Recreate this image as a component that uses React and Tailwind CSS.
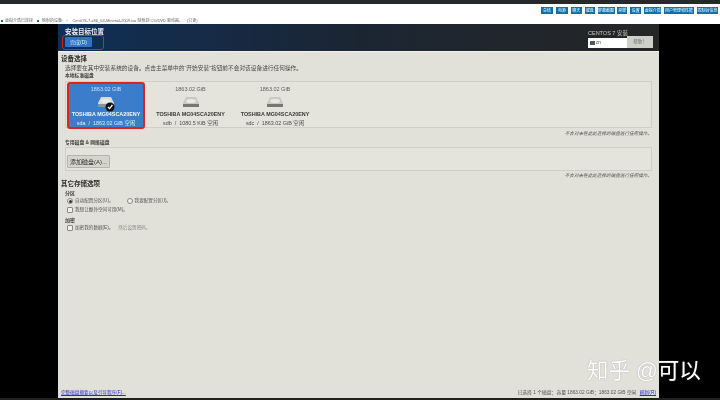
const font = { fontFamily: '"Liberation Sans","Noto Sans CJK SC",sans-serif' };

function Disk({ selected, sub, free }) {
  return (
    <div className={`w-[76px] h-[45px] flex flex-col items-center pt-[3px] rounded-[2px] relative ${selected ? "bg-[#3b7dcb] text-[#f2f6fb] outline-2 -outline-offset-1 outline-[#d8261c]" : "text-[#3a3a36]"}`}>
      <div className="text-[5.5px] leading-[7px] opacity-80">1863.02 GiB</div>
      <svg width="20" height="13" viewBox="0 0 20 13" className="mt-[3px] overflow-visible relative z-10">
        <path d="M5 1h10l3 6v4H2V7z" fill={selected ? "#d6d9dc" : "#c9cac4"} />
        <path d="M2 8h16v3H2z" fill={selected ? "#8d9299" : "#77786f"} />
        <ellipse cx="10" cy="5" rx="5" ry="2" fill="#e8e9e6" />
        {selected && <circle cx="14" cy="11" r="4.5" fill="#111" />}
        {selected && <path d="M12 11l1.6 1.6L16.4 9" stroke="#fff" strokeWidth="1.3" fill="none" />}
      </svg>
      <div className="text-[5.4px] leading-[7px] font-bold mt-[2px] whitespace-nowrap">TOSHIBA MG04SCA20ENY</div>
      <div className="text-[5.4px] leading-[7px] mt-[2px] whitespace-nowrap opacity-90">{sub} &nbsp;/&nbsp; {free} 空闲</div>
    </div>
  );
}

function Check({ children }) {
  return (
    <div className="flex items-center gap-[2px] text-[4.6px] leading-[8px] text-[#55564f]">
      <span className="w-[6px] h-[6px] border-[0.5px] border-[#8a8a82] bg-[#f1f1ec] rounded-[1px]" />
      {children}
    </div>
  );
}

function Radio({ on, children }) {
  return (
    <div className="flex items-center gap-[2px] text-[4.6px] leading-[8px] text-[#55564f]">
      <span className="w-[6px] h-[6px] border-[0.5px] border-[#8a8a82] rounded-full flex items-center justify-center bg-[#f1f1ec]">
        {on && <span className="w-[3px] h-[3px] rounded-full bg-[#333]" />}
      </span>
      {children}
    </div>
  );
}

const tools = [
  ["总结", 12], ["电源", 12], ["聊天", 11], ["键盘", 10], ["屏幕截图", 17], ["刷新", 10],
  ["设置", 11], ["虚拟介质", 17], ["用户管理和性能", 30], ["控制台信息", 21],
];

export default function App() {
  return (
    <div style={font} className="relative w-[720px] h-[400px] bg-black flex flex-col overflow-hidden blur-[0.35px]">
      <div className="h-[4px] bg-[#26282a] shrink-0" />
      <div className="h-[20px] bg-white shrink-0 flex flex-col pt-[3px]">
        <div className="flex justify-end gap-[2.9px] pr-[2px] h-[7px]">
          {tools.map(([t, w]) => (
            <div key={t} style={{ width: w }} className="bg-[#0f6fa9] text-white text-[4px] leading-[7px] text-center whitespace-nowrap overflow-hidden">{t}</div>
          ))}
        </div>
        <div className="flex items-center pl-[1px] mt-[4px] text-[4px] leading-[6px] text-[#666] whitespace-nowrap">
          <span className="w-[2px] h-[2px] bg-[#1a7a35]" />
          <span className="ml-[2px]">虚拟介质已连接</span>
          <span className="w-[2px] h-[2px] bg-[#1a7a35] ml-[4px]" />
          <span className="ml-[3px]">映射的设备:</span>
          <span className="ml-[3px]">›</span>
          <span className="ml-[5px]">CentOS-7-x86_64-Minimal-2009.iso 映射到 CD/DVD 驱动器。</span>
          <span className="ml-[4px]">(只读)</span>
        </div>
      </div>

      <div className="flex-1 flex justify-center min-h-0">
        <div className="w-[601px] ml-[-3px] flex flex-col">
          <header className="h-[27px] shrink-0 flex justify-between bg-gradient-to-r from-[#0e2f58] via-[#1b2532] to-[#262626] pl-[7px] pr-[6px] pt-[4px]">
            <div>
              <div className="text-[6.5px] leading-[8px] font-bold text-[#eef1f4]">安装目标位置</div>
              <div className="relative mt-[1px] w-[39px] h-[11px]">
                <div className="w-[27px] h-[10px] bg-[#2f74c4] rounded-[1px] text-[5px] leading-[10px] text-center text-[#dbe8f6]">完成(D)</div>
                <div className="absolute -left-[3px] -top-[2px] w-[42px] h-[15px] border-[1.5px] border-[#d2251c] rounded-[3px]" />
              </div>
            </div>
            <div className="flex flex-col w-[65px]">
              <div className="text-[5.5px] leading-[8px] text-[#c9c9c9] whitespace-nowrap pt-[1px]">CENTOS 7 安装</div>
              <div className="flex mt-[1px]">
                <div className="w-[39px] h-[10px] bg-white flex items-center gap-[1px] pl-[2px] text-[4.5px] text-[#333]">
                  <span className="w-[5px] h-[4px] bg-[#555]" />cn
                </div>
                <div className="w-[26px] h-[12px] -mt-[2px] bg-[#cfcfca] text-[4.5px] leading-[12px] text-center text-[#666]">帮助！</div>
              </div>
            </div>
          </header>

          <main className="flex-1 min-h-0 bg-[#e1e1da] border-t border-[#f3f3ee] pl-[3px] pr-[7px] flex flex-col text-[#3b3b36]">
            <h2 className="text-[6.5px] leading-[8px] font-bold mt-[3px] text-[#2e2e2a]">设备选择</h2>
            <p className="text-[5.7px] leading-[7px] ml-[4px] mt-[2px] text-[#4a4a45] whitespace-nowrap">选择要在其中安装系统的设备。点击主菜单中的“开始安装”按钮前不会对该设备进行任何操作。</p>
            <div className="text-[4.8px] leading-[6px] font-bold ml-[4px] mt-[1px] text-[#44443f]">本地标准磁盘</div>

            <section className="ml-[4px] mt-[2px] h-[47px] border border-[#cfcfc7] bg-[#e4e4dd] flex gap-[8.5px] pl-[2px] pt-px">
              <Disk selected sub="sda" free="1863.02 GiB" />
              <Disk sub="sdb" free="1080.5 KiB" />
              <Disk sub="sdc" free="1863.02 GiB" />
            </section>
            <p className="text-[4.6px] leading-[6px] italic text-right mt-[3px] text-[#55554f]">不会对未在此处选择的磁盘进行任何操作。</p>

            <div className="text-[4.8px] leading-[6px] font-bold ml-[4px] mt-[3px] text-[#44443f]">专用磁盘 &amp; 网络磁盘</div>
            <section className="ml-[4px] mt-[1px] h-[24px] border border-[#cfcfc7] bg-[#e4e4dd] flex items-end pl-[1px] pb-[2px]">
              <button className="w-[43px] h-[13px] bg-[#d5d5ce] border-[0.5px] border-[#b4b4ac] rounded-[1px] text-[6px] leading-[12px] text-center text-[#33332f]">添加磁盘(A)...</button>
            </section>
            <p className="text-[4.6px] leading-[6px] italic text-right mt-[2px] text-[#55554f]">不会对未在此处选择的磁盘进行任何操作。</p>

            <h2 className="text-[6.5px] leading-[8px] font-bold mt-[1px] text-[#2e2e2a]">其它存储选项</h2>
            <div className="text-[5px] leading-[6px] font-bold ml-[4px] mt-[2px] text-[#44443f]">分区</div>
            <div className="flex gap-[13px] ml-[6px] mt-px">
              <Radio on>自动配置分区(U)。</Radio>
              <Radio>我要配置分区(I)。</Radio>
            </div>
            <div className="ml-[6px] mt-px"><Check>我想让额外空间可用(M)。</Check></div>
            <div className="text-[5px] leading-[6px] font-bold ml-[4px] mt-[3px] text-[#44443f]">加密</div>
            <div className="ml-[6px] mt-[1px]"><Check>加密我的数据(E)。<span className="ml-[3px] text-[#8c8c85]">然后设置密码。</span></Check></div>

            <footer className="mt-auto mb-[2px] flex justify-between items-center text-[4.8px] leading-[7px] whitespace-nowrap">
              <span className="text-[#2a2ad0] underline text-[4.6px]">完整磁盘摘要以及引导程序(F)...</span>
              <span className="text-[#55554f] mr-[-4px]">已选择 1 个磁盘；容量 1863.02 GiB；1863.02 GiB 空闲 <span className="text-[#2a2ad0] underline ml-[2px]">刷新(R)</span></span>
            </footer>
          </main>
        </div>
      </div>
      <div className="h-[2px] bg-[#1b211e] shrink-0" />

      <div className="absolute left-[587px] top-[358px] text-[21.5px] leading-[26px] text-white whitespace-nowrap" style={{ textShadow: "0 0 1px #888" }}>知乎 @可以</div>
    </div>
  );
}
